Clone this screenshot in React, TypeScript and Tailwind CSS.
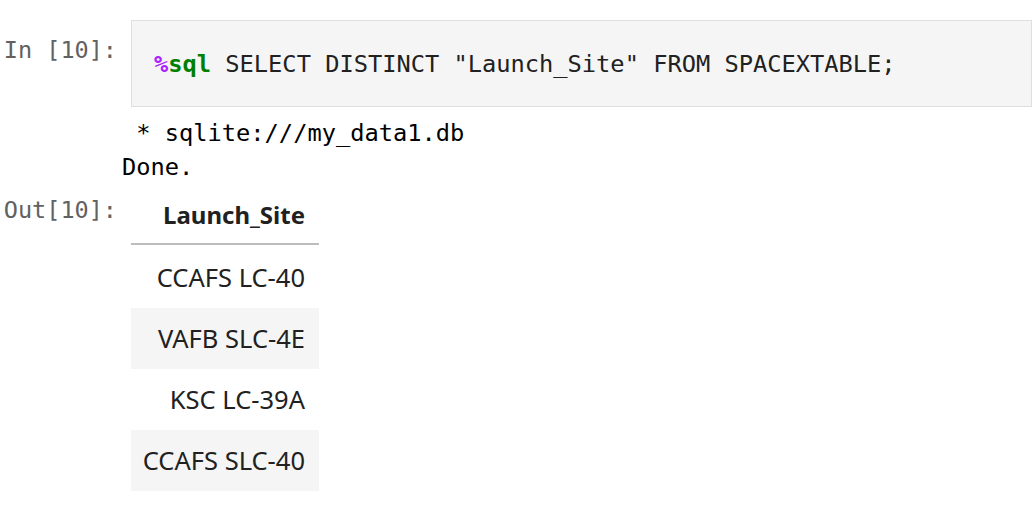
import React from "react";

const mono = { fontFamily: '"DejaVu Sans Mono", monospace' };

export default function App() {
  const rows = ["CCAFS LC-40", "VAFB SLC-4E", "KSC LC-39A", "CCAFS SLC-40"];
  return (
    <div className="w-[1032px] h-[516px] bg-white overflow-hidden text-[#212121]">
      {/* input cell */}
      <div className="flex pt-[20px]">
        <div
          className="w-[131px] shrink-0 pr-[14px] pt-[13px] text-right text-[23.5px] leading-[34px] text-[#616161]"
          style={mono}
        >
          In&nbsp;[10]:
        </div>
        <div
          className="flex-1 h-[87px] border border-[#dfdfdf] bg-[#f5f5f5] flex items-center pl-[22px] pt-[2px] text-[23.7px] whitespace-pre"
          style={mono}
        >
          <span className="text-[#aa22ff] font-bold">%</span>
          <span className="text-[#008000] font-bold">sql</span>
          <span className="text-[#212121]"> SELECT DISTINCT "Launch_Site" FROM SPACEXTABLE;</span>
        </div>
      </div>
      {/* stream output */}
      <div
        className="pl-[122px] pt-[9px] text-[23.7px] leading-[34px] whitespace-pre text-black"
        style={mono}
      >
        <div> * sqlite:///my_data1.db</div>
        <div>Done.</div>
      </div>
      {/* execute result */}
      <div className="flex">
        <div
          className="w-[131px] shrink-0 pr-[14px] pt-[9px] text-right text-[23.5px] leading-[34px] text-[#616161]"
          style={mono}
        >
          Out[10]:
        </div>
        <div
          className="w-[188px] flex flex-col text-[#212121]"
          style={{ fontFamily: '"Noto Sans", "Open Sans", sans-serif' }}
        >
          <div className="h-[61px] flex items-center justify-end pr-[14px] pt-[2px] text-[24px] font-bold border-b-2 border-[#bdbdbd]">
            Launch_Site
          </div>
          <div className="h-[2px]" />
          {rows.map((r, i) => (
            <div
              key={r}
              className={`h-[61px] flex items-center justify-end pr-[14px] text-[25.5px] ${
                i % 2 === 1 ? "bg-[#f5f5f5]" : "bg-white"
              }`}
            >
              {r}
            </div>
          ))}
        </div>
      </div>
    </div>
  );
}
